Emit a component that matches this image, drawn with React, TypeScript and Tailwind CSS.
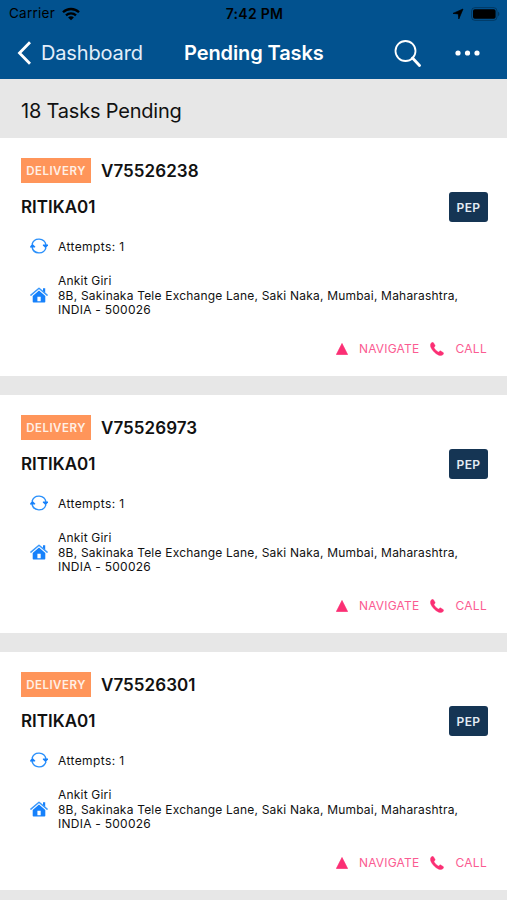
import type { ReactNode } from "react";

type Task = {
  id: string;
  type: string;
  client: string;
  tag: string;
  attempts: number;
  name: string;
  street: string;
  region: string;
};

const tasks: Task[] = ["V75526238", "V75526973", "V75526301"].map((id) => ({
  id,
  type: "DELIVERY",
  client: "RITIKA01",
  tag: "PEP",
  attempts: 1,
  name: "Ankit Giri",
  street: "8B, Sakinaka Tele Exchange Lane, Saki Naka, Mumbai, Maharashtra,",
  region: "INDIA - 500026",
}));

function WifiIcon() {
  return (
    <svg className="ml-[7px] h-[14px] w-[18px]" viewBox="0 0 18 14" fill="none" stroke="currentColor" strokeWidth="2.3">
      <path d="M1 5.2C5.4 0.9 12.6 0.9 17 5.2" />
      <path d="M4 8.4c2.8-2.6 7.2-2.6 10 0" />
      <path d="M9 13.2 6.1 10.4c1.6-1.4 4.2-1.4 5.8 0z" fill="currentColor" stroke="none" />
    </svg>
  );
}

function LocationIcon() {
  return (
    <svg className="h-[12px] w-[12px]" viewBox="0 0 12 12" fill="currentColor">
      <path d="M11 1 6.8 11 6.3 5.9 1 5.4z" stroke="currentColor" strokeWidth="0.7" strokeLinejoin="round" />
    </svg>
  );
}

function BatteryIcon() {
  return (
    <svg className="ml-[7px] h-[14px] w-[29px]" viewBox="0 0 29 14">
      <rect x="0.6" y="0.6" width="25.4" height="12.8" rx="3.4" fill="none" stroke="#000" strokeOpacity="0.3" />
      <rect x="2" y="2.2" width="22.6" height="9.6" rx="1.8" fill="#000" />
      <path d="M27.2 4.8c1.5.6 1.5 3.8 0 4.4z" fill="#000" fillOpacity="0.4" />
    </svg>
  );
}

function RefreshIcon() {
  return (
    <svg className="h-[18px] w-[18px]" viewBox="0 0 18 18" fill="none" stroke="#2a90fb" strokeWidth="1.4">
      <path d="M2 7.4A7.2 7.2 0 0 1 16 8" />
      <path d="M16 10.6A7.2 7.2 0 0 1 2 10" />
      <path d="M12.9 7.6h5.1v1L15.6 11.3 12.9 8.6z" fill="#1681fb" stroke="none" />
      <path d="M0 10.4h5.1v-1L2.4 6.7 0 9.4z" fill="#1681fb" stroke="none" />
    </svg>
  );
}

function HomeIcon() {
  return (
    <svg className="h-[16px] w-[18px]" viewBox="0 0 18 16" fill="#1681fb">
      <path d="M0.9 8.1 9 1.3l8.1 6.8" fill="none" stroke="#3a98fb" strokeWidth="1.5" strokeLinecap="round" strokeLinejoin="round" />
      <path d="M13 1.3h2.2v4.5l-2.2-1.9z" />
      <path
        d="M9 3.5 15.3 8.9V14.7a.8.8 0 0 1-.8.8H3.5a.8.8 0 0 1-.8-.8V8.9zM7.4 9.7V14.3H10.7V9.7z"
        fillRule="evenodd"
      />
    </svg>
  );
}

function PhoneIcon() {
  return (
    <svg className="h-[14px] w-[14px]" viewBox="0 0 14 14" fill="#fb2f74">
      <path
        d="M1.1 1.2C2.1.2 3.1.1 3.6.9L5 3.2c.3.6.1 1.1-.4 1.5-.7.5-.7.8-.3 1.5.8 1.4 2 2.6 3.6 3.5.6.4.9.3 1.4-.3.4-.6 1-.7 1.5-.4l2.3 1.5c.8.5.6 1.4-.3 2.3-1.4 1.3-3.8.9-6.7-1.1C4.3 10.2 2.4 8.3 1.3 6.2.2 4.1.1 2.4 1.1 1.2z"
        stroke="#fb2f74"
        strokeWidth="0.4"
      />
    </svg>
  );
}

function Detail({ icon, children }: { icon: ReactNode; children: ReactNode }) {
  return (
    <div className="flex items-center gap-[10px] pl-[9px]">
      {icon}
      <div className="pt-[2px] text-[12px] leading-[14.7px] whitespace-nowrap">{children}</div>
    </div>
  );
}

function TaskCard({ task }: { task: Task }) {
  return (
    <div className="h-[238px] shrink-0 bg-white pt-5 pr-5 pl-[21px]">
      <div className="flex h-[25px] items-center gap-[10px]">
        <span className="flex h-[25px] w-[70px] items-center justify-center bg-[#ff955a] pt-[2px] text-[11.5px] font-semibold tracking-[0.5px] text-[#fff0e6]">
          {task.type}
        </span>
        <span className="pt-[2px] text-[17px] font-semibold tracking-[0.05px]">{task.id}</span>
      </div>
      <div className="mt-[9px] -mr-px flex h-[30px] items-center justify-between">
        <span className="pt-[2px] text-[17px] font-semibold">{task.client}</span>
        <span className="flex h-[30px] w-[39px] items-center justify-center rounded-[3px] bg-[#153554] pt-px text-[12px] font-semibold tracking-[0.4px] text-[#e4ecf4]">
          {task.tag}
        </span>
      </div>
      <div className="mt-[15px]">
        <Detail icon={<RefreshIcon />}>
          <span className="tracking-[0.4px]">Attempts: {task.attempts}</span>
        </Detail>
      </div>
      <div className="mt-[17px]">
        <Detail icon={<HomeIcon />}>
          <p className="tracking-[0.2px]">{task.name}</p>
          <p className="tracking-[0.2px]">{task.street}</p>
          <p className="tracking-[0.25px]">{task.region}</p>
        </Detail>
      </div>
      <div className="mt-[21px] flex h-[20px] items-center justify-end text-[12px] text-[#fb5b92]">
        <svg className="mr-[11px] h-[12px] w-[12px]" viewBox="0 0 12 12" fill="#fb2f74">
          <path d="M6 .5 11.6 11.5H.4z" stroke="#fb2f74" strokeWidth="0.7" strokeLinejoin="round" />
        </svg>
        <span className="mr-[11px] tracking-[0.2px]">NAVIGATE</span>
        <PhoneIcon />
        <span className="ml-[11px] tracking-[0.3px]">CALL</span>
      </div>
    </div>
  );
}

export default function App() {
  return (
    <div className="flex h-[900px] w-[507px] flex-col overflow-hidden bg-[#e7e7e7] font-['Inter','Liberation_Sans',sans-serif] text-[#111]">
      <header className="h-[79px] shrink-0 bg-[#02528f]">
        <div className="grid h-[27px] grid-cols-[1fr_auto_1fr] items-center pr-[7px] pl-[9px] text-[13.5px] text-black">
          <div className="flex items-center tracking-[0.25px]">
            Carrier
            <WifiIcon />
          </div>
          <span className="text-[14px] font-semibold tracking-[0.3px]">7:42 PM</span>
          <div className="flex items-center justify-end">
            <LocationIcon />
            <BatteryIcon />
          </div>
        </div>
        <div className="flex h-[52px] items-center pl-[17px] text-[20px] text-white">
          <svg className="h-[24px] w-[14px]" viewBox="0 0 14 24" fill="none" stroke="currentColor" strokeWidth="2.8">
            <path d="M13 1.3 2.5 12 13 22.7" />
          </svg>
          <span className="ml-[10px] w-[143px] tracking-[-0.15px] text-[#e2eefa]">Dashboard</span>
          <span className="w-[210px] font-semibold tracking-[-0.1px]">Pending Tasks</span>
          <svg className="h-[27px] w-[27px]" viewBox="0 0 27 27" fill="none" stroke="currentColor">
            <circle cx="11.5" cy="11" r="10" strokeWidth="1.8" />
            <path d="m18.5 18 7 7.5" strokeWidth="2.8" strokeLinecap="round" />
          </svg>
          <svg className="ml-[34px] h-[6px] w-[26px]" viewBox="0 0 26 6" fill="currentColor">
            <circle cx="3" cy="3" r="2.6" />
            <circle cx="12.5" cy="3" r="2.6" />
            <circle cx="22" cy="3" r="2.6" />
          </svg>
        </div>
      </header>
      <div className="flex h-[59px] shrink-0 items-center pt-[5px] pl-[21px] text-[20px] tracking-[-0.2px]">18 Tasks Pending</div>
      <main className="flex flex-col gap-[19px]">
        {tasks.map((task) => (
          <TaskCard key={task.id} task={task} />
        ))}
      </main>
    </div>
  );
}
